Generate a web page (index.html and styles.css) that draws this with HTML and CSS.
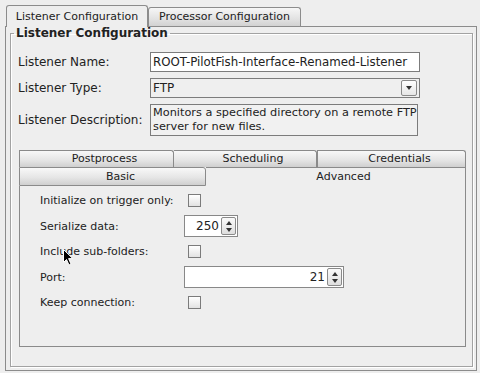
FILE: index.html
```html
<!DOCTYPE html>
<html lang="en">
<head>
  <meta charset="UTF-8">
  <title>Listener Configuration</title>
  <link rel="stylesheet" href="styles.css">
</head>
<body>
  <div class="app">
    <div class="tabs">
      <div class="tab active">Listener Configuration</div>
      <div class="tab">Processor Configuration</div>
    </div>

    <div class="tab-body">
      <fieldset class="group">
        <legend>Listener Configuration</legend>

        <div class="form">
          <div class="label">Listener Name:</div>
          <div class="text-field">ROOT-PilotFish-Interface-Renamed-Listener</div>

          <div class="label">Listener Type:</div>
          <div class="combo">
            <span>FTP</span>
            <span class="combo-btn"><i class="arrow-down"></i></span>
          </div>

          <div class="label">Listener Description:</div>
          <div class="text-area">Monitors a specified directory on a remote FTP<br>server for new files.</div>
        </div>

        <div class="subtabs">
          <div class="tab-row">
            <div class="subtab w1">Postprocess</div>
            <div class="subtab w2">Scheduling</div>
            <div class="subtab w3">Credentials</div>
          </div>
          <div class="tab-row">
            <div class="subtab basic">Basic</div>
            <div class="subtab selected">Advanced</div>
          </div>

          <div class="sub-body">
            <div class="row">
              <div class="row-label">Initialize on trigger only:</div>
              <span class="check"></span>
            </div>
            <div class="row tall">
              <div class="row-label">Serialize data:</div>
              <div class="spinner small">
                <span class="spin-value">250</span>
                <span class="spin-btns"><i class="arrow-up"></i><i class="arrow-down"></i></span>
              </div>
            </div>
            <div class="row">
              <div class="row-label">Include sub-folders:</div>
              <span class="check"></span>
            </div>
            <div class="row tall">
              <div class="row-label">Port:</div>
              <div class="spinner wide">
                <span class="spin-value">21</span>
                <span class="spin-btns"><i class="arrow-up"></i><i class="arrow-down"></i></span>
              </div>
            </div>
            <div class="row">
              <div class="row-label">Keep connection:</div>
              <span class="check"></span>
            </div>
          </div>
        </div>
      </fieldset>
    </div>
  </div>

  <!-- mouse pointer sitting over the panel -->
  <svg class="cursor" width="11" height="17" viewBox="0 0 11 17">
    <path d="M0.5 0.5 L0.5 13.5 L3.5 10.5 L6 16 L8 15 L5.6 9.6 L9.8 9.6 Z" fill="#000" stroke="#fff" stroke-width="1"/>
  </svg>
</body>
</html>
```

FILE: styles.css
```css
body {
  margin: 0;
  background: #eeeeee;
  font-family: "DejaVu Sans", Verdana, sans-serif;
  font-size: 11px;
  color: #222;
}

.app {
  padding: 5px 3px 0 5px;
}

/* outer tabs */
.tabs {
  display: flex;
  align-items: flex-end;
  padding-left: 1px;
  height: 21px;
}

.tab {
  box-sizing: border-box;
  height: 19px;
  width: 153px;
  border: 1px solid #8c8c8c;
  border-bottom: none;
  border-radius: 3px 3px 0 0;
  background: linear-gradient(#f6f6f6, #e2e2e2 60%, #d2d2d2);
  text-align: center;
  line-height: 18px;
}

.tab.active {
  position: relative;
  height: 22px;
  width: 142px;
  margin-bottom: -1px;
  background: #eeeeee;
  line-height: 21px;
  z-index: 1;
}

.tab-body {
  box-sizing: border-box;
  height: 345px;
  border: 1px solid #8c8c8c;
  padding: 0 3px 3px 4px;
  display: flex;
  flex-direction: column;
}

/* titled group */
.group {
  flex: 1;
  margin: 0;
  min-width: 0;
  padding: 12px 7px 0 7px;
  border: 1px solid #a2a2a2;
  box-shadow: inset 1px 1px 0 #fff, 1px 1px 0 #fff;
}

.group legend {
  margin-left: -4px;
  padding: 0 2px;
  font-size: 12px;
  font-weight: bold;
  line-height: 13px;
}

.form {
  display: grid;
  grid-template-columns: 132px auto;
  grid-template-rows: 20px 20px 32px;
  row-gap: 6px;
  align-items: center;
  font-size: 12px;
}

.text-field,
.combo,
.text-area {
  box-sizing: border-box;
  border: 1px solid #7c7c7c;
  padding: 0 2px;
  white-space: nowrap;
}

.text-field {
  width: 270px;
  height: 20px;
  line-height: 18px;
  background: #fff;
  font-size: 11.8px;
}

.combo {
  width: 270px;
  height: 20px;
  line-height: 18px;
  background: #efefef;
  display: flex;
  justify-content: space-between;
  align-items: center;
}

.combo-btn {
  box-sizing: border-box;
  width: 16px;
  height: 16px;
  border: 1px solid #8a8a8a;
  border-radius: 2px;
  background: linear-gradient(#ffffff, #e6e6e6);
  display: flex;
  align-items: center;
  justify-content: center;
}

.text-area {
  width: 268px;
  height: 32px;
  line-height: 14px;
  padding-top: 1px;
  background: #f1f1f1;
  font-size: 11.3px;
  overflow: hidden;
}

.arrow-down,
.arrow-up {
  display: block;
  width: 0;
  height: 0;
  border-left: 3px solid transparent;
  border-right: 3px solid transparent;
}

.arrow-down {
  border-top: 4px solid #333;
}

.arrow-up {
  border-bottom: 4px solid #333;
}

/* inner tabbed pane */
.subtabs {
  width: 447px;
  margin: 14px 0 0 1px;
}

.tab-row {
  display: flex;
}

.subtab {
  box-sizing: border-box;
  height: 17px;
  padding-left: 16px;
  border: 1px solid #8a8a8a;
  border-bottom: none;
  border-radius: 0 3px 0 0;
  background: linear-gradient(#f8f8f8, #e6e6e6 55%, #cfcfcf);
  text-align: center;
  line-height: 16px;
}

.subtab.w1 { width: 155px; }
.subtab.w2 { width: 143px; border-left: none; }
.subtab.w3 { width: 149px; }

.subtab.basic {
  width: 187px;
  height: 19px;
  border-bottom: 1px solid #8a8a8a;
  line-height: 17px;
}

.subtab.selected {
  flex: 1;
  height: 19px;
  border-left: none;
  border-radius: 0;
  background: #eeeeee;
  line-height: 17px;
}

.sub-body {
  box-sizing: border-box;
  height: 161px;
  border: 1px solid #8a8a8a;
  border-top: none;
  padding: 2px 0 0 20px;
}

.row {
  height: 25px;
  display: flex;
  align-items: center;
}

.row.tall {
  height: 26px;
}

.row-label {
  width: 144px;
}

.check {
  box-sizing: border-box;
  width: 13px;
  height: 13px;
  margin-left: 4px;
  border: 1px solid #7b7b7b;
  background: linear-gradient(#ffffff, #e2e2e2);
}

.spinner {
  box-sizing: border-box;
  height: 22px;
  border: 1px solid #888;
  background: #fff;
  display: flex;
  align-items: center;
  padding: 1px;
}

.spinner.small { width: 54px; }
.spinner.wide { width: 160px; }

.spin-value {
  flex: 1;
  text-align: right;
  padding-right: 2px;
  font-size: 12px;
}

.spin-btns {
  box-sizing: border-box;
  width: 15px;
  height: 18px;
  border: 1px solid #8a8a8a;
  border-radius: 2px;
  background: linear-gradient(#fafafa, #dedede);
  display: flex;
  flex-direction: column;
  align-items: center;
  justify-content: space-around;
  padding: 1px 0;
}

.cursor {
  position: absolute;
  left: 63px;
  top: 249px;
}
```
